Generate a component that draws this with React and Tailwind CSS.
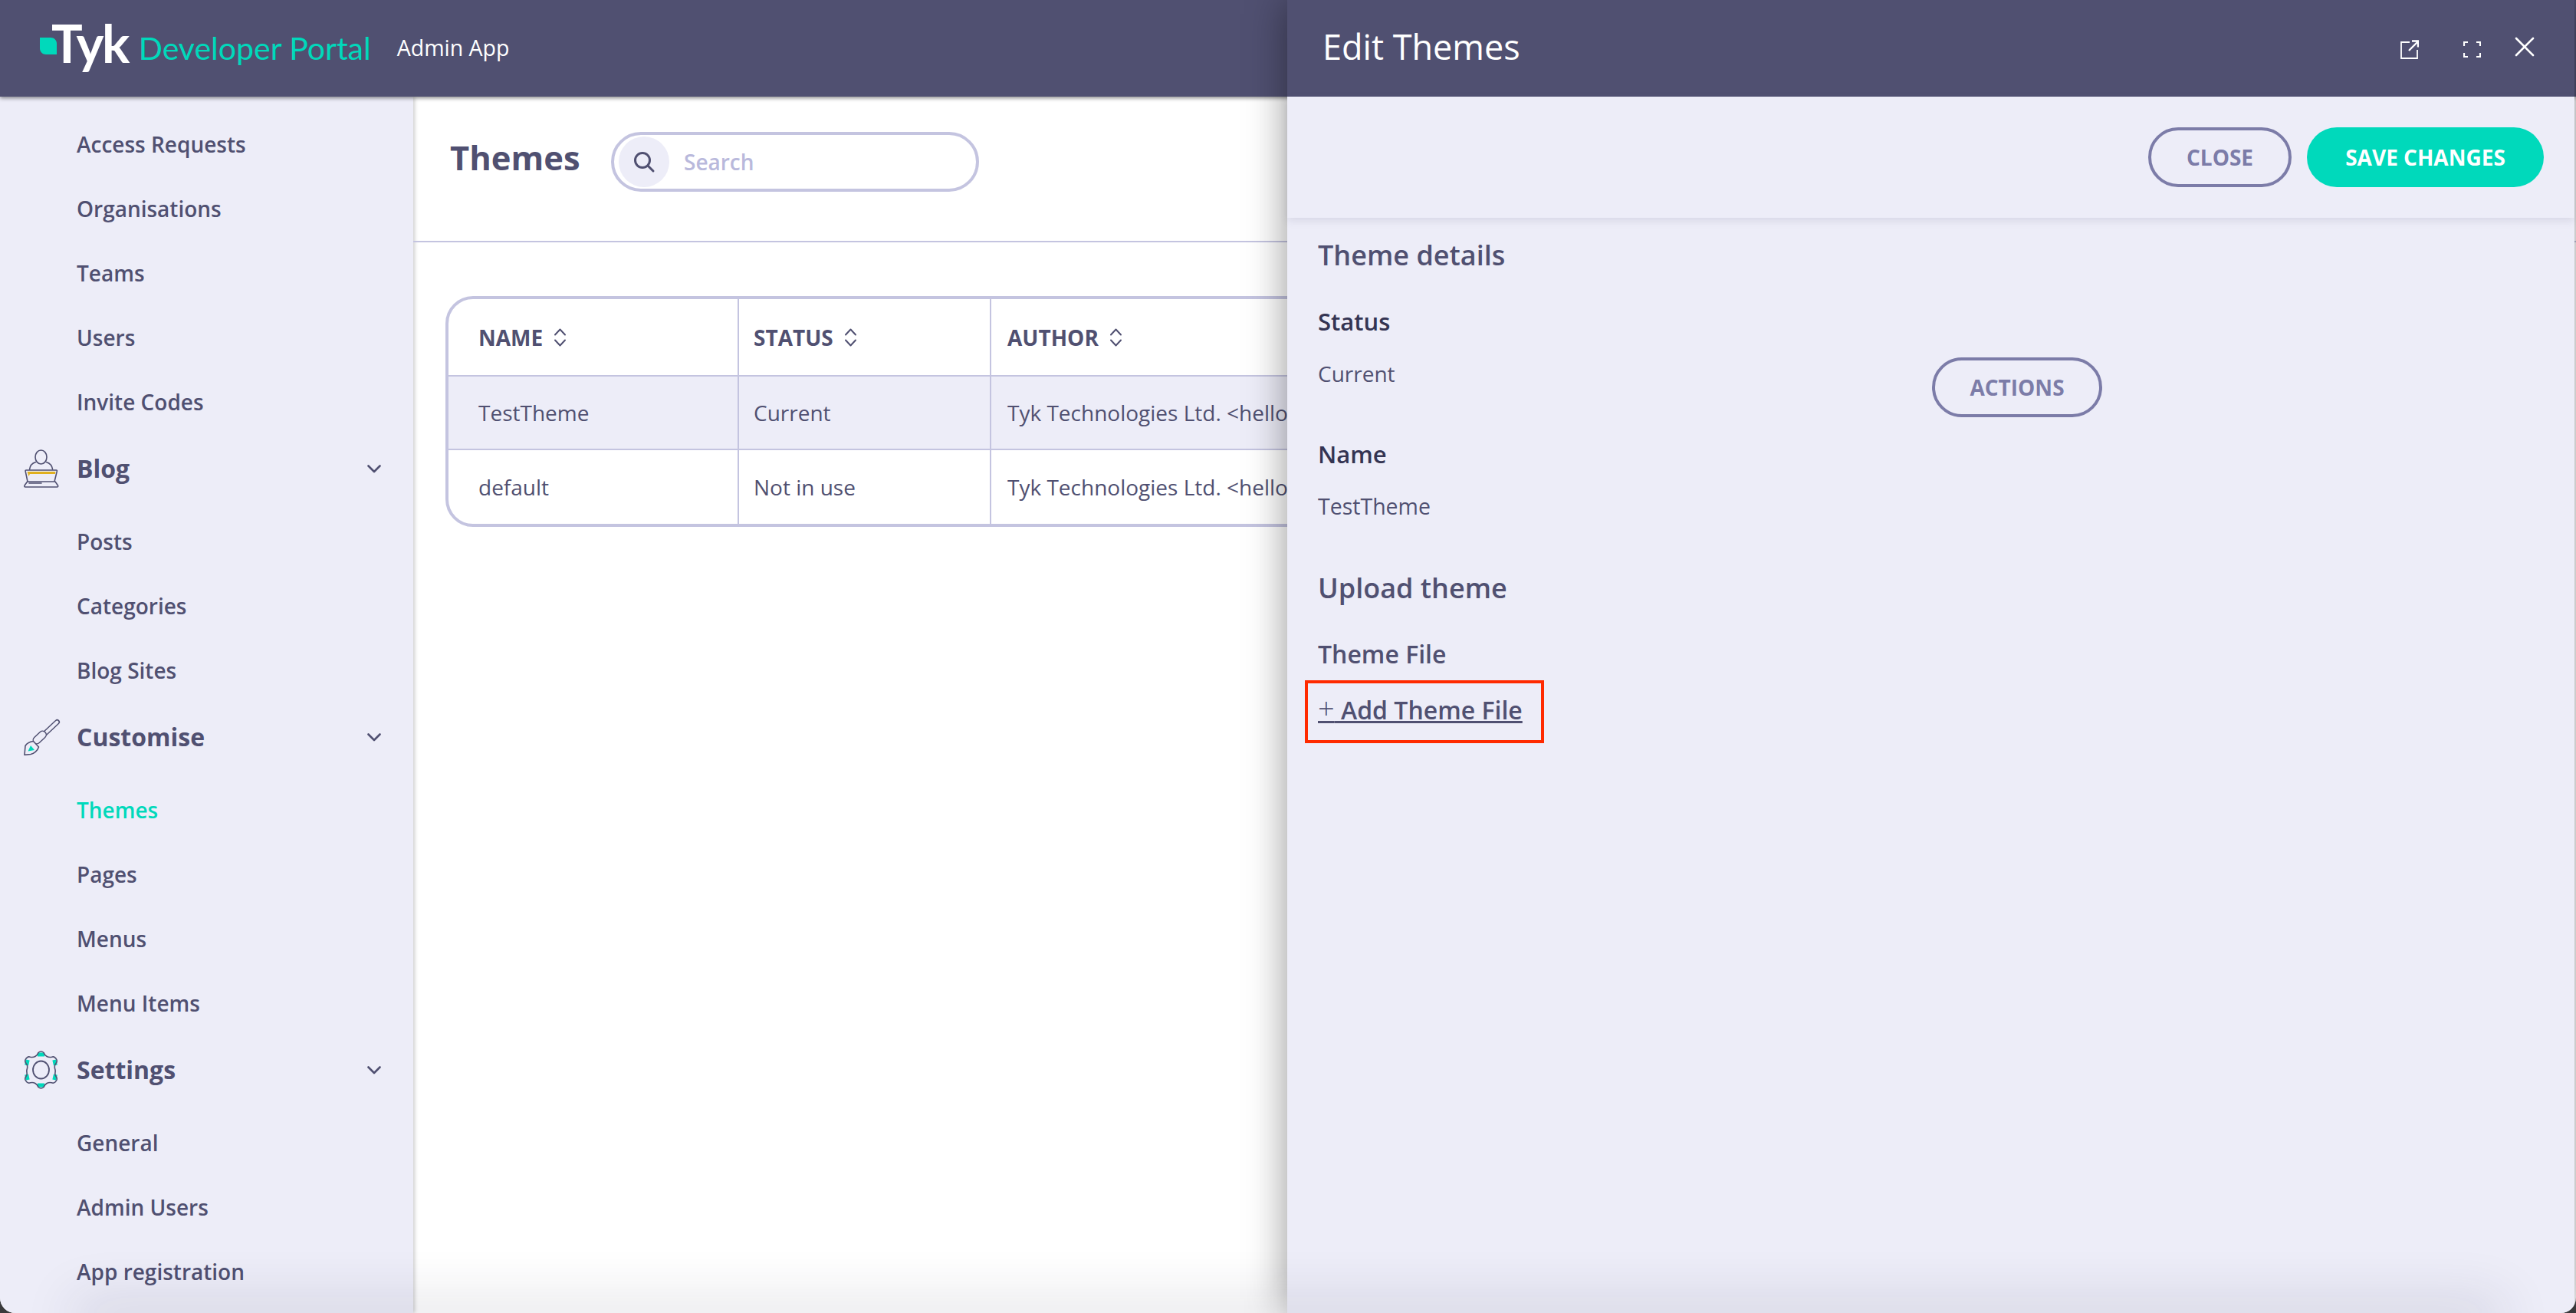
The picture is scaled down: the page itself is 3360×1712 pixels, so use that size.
import React from "react";

const C = "#505071";

function Chevron() {
  return (
    <svg width="18" height="11" viewBox="0 0 18 11" fill="none" stroke={C} strokeWidth="2.6" strokeLinecap="round" strokeLinejoin="round">
      <path d="M1.5 1.5 9 9l7.5-7.5" />
    </svg>
  );
}

function BlogIcon() {
  return (
    <svg width="46" height="50" viewBox="0 0 46 50" fill="none" stroke={C} strokeWidth="1.6" strokeLinejoin="round" strokeLinecap="round">
      <ellipse cx="22.5" cy="10" rx="7.5" ry="9" />
      <path d="M7.6 26C8 21 11 18 15.5 16.5M37.6 26C37 21 34 18 29.5 16.5" />
      <path d="M3 27h39.5c.6 0 1 .5.9 1.1L40 42H5L2.1 28.1C2 27.5 2.400 27 3 27Z" />
      <path d="M4.600 42 1 47c-.5 1 0 2 1 2h41.500c1 0 1.500-1 1-2l-3.500-5" />
      <path d="M7 44h16" />
      <path d="M4.500 29h37l-.5 3H8l-1.500 3-1-3Z" fill="#e0b01f" stroke="none" />
    </svg>
  );
}

function BrushIcon() {
  return (
    <svg width="48" height="48" viewBox="0 0 48 48" fill="none" strokeLinecap="round" strokeLinejoin="round">
      <path d="M43.500 4.500 28 19" stroke={C} strokeWidth="7" />
      <path d="M43.500 4.500 28 19" stroke="#ededf8" strokeWidth="4" />
      <path d="M24.500 21 17 28" stroke={C} strokeWidth="11" />
      <path d="M24.500 21 17 28" stroke="#ededf8" strokeWidth="8" />
      <path d="M1 47.300 2 35.500C4 32 9 30 12.500 29.500L19.500 37C18 42 13 46 9 46.500Z" fill="#ededf8" stroke={C} strokeWidth="1.600" />
      <path d="M5.500 42.500 9 35l5 6Z" fill="#00d9bb" />
    </svg>
  );
}

function GearIcon() {
  return (
    <svg width="46" height="50" viewBox="0 0 46 50" fill="none">
      <path d="M18 5h9M39.800 12l1.600 7M41.400 31l-1.600 7M27 45h-9M5.200 38l-1.600-7M3.600 19l1.600-7" stroke="#00d9bb" strokeWidth="5" />
      <path d="M19 2.500C21 .8 24 .8 26 2.500 27.500 7 32 9.500 36.500 8.200 39 7.300 41.500 9 43 12c.6 1.800.3 3-1 4.500-3 3-1.800 5.500-1 8.500.8 3-1.500 5.500 1 8.500 1.300 1.500 1.600 2.700 1 4.500-1.500 3-4 4.700-6.500 3.800C32 40.500 27.500 43 26 47.500c-2 1.700-5 1.700-7 0C17.500 43 13 40.500 8.500 41.800 6 42.700 3.500 41 2 38c-.6-1.800-.3-3 1-4.500 2.500-3 .2-5.500 1-8.500.8-3 2-5.500-1-8.500-1.300-1.500-1.600-2.700-1-4.500C3.500 9 6 7.300 8.500 8.200 13 9.500 17.500 7 19 2.500Z" stroke={C} strokeWidth="1.600" />
      <ellipse cx="22.500" cy="25" rx="10.500" ry="11.500" stroke={C} strokeWidth="1.800" />
    </svg>
  );
}

function SortIcon() {
  return (
    <svg width="19" height="24" viewBox="0 0 19 24" fill="none" stroke={C} strokeWidth="2" strokeLinecap="round" strokeLinejoin="round">
      <path d="M3 8.500 9.500 1.500 16 8.500M3 15.500l6.500 7 6.500-7" />
    </svg>
  );
}

function NavItem({ label, active }) {
  return (
    <div className={"flex h-[84px] items-center pl-[100px] text-[28px] font-semibold " + (active ? "text-[#00d9bb]" : "text-[#505071]")}>
      {label}
    </div>
  );
}

function NavGroup({ label, icon }) {
  return (
    <div className="flex h-[98px] items-center pb-[8px] pl-[31px] pr-[42px]">
      <div className="flex w-[69px] shrink-0 items-center">{icon}</div>
      <span className="flex-1 text-[32px] font-bold text-[#505071]">{label}</span>
      <Chevron />
    </div>
  );
}

function HeadCell({ label, className }) {
  return (
    <div className={"flex items-center border-b-2 border-[#c4c4e0] " + className}>
      <span className="text-[28px] font-bold text-[#505071]">{label}</span>
      <span className="ml-[13px]"><SortIcon /></span>
    </div>
  );
}

function Cell({ children, className }) {
  return <div className={"flex items-center overflow-hidden whitespace-nowrap text-[28px] text-[#505071] " + className}>{children}</div>;
}

function Btn({ children, className }) {
  return (
    <button className={"flex h-[78px] items-center justify-center rounded-full text-[28px] font-bold " + className}>
      {children}
    </button>
  );
}

export default function App() {
  return (
    <div className="h-[1712px] w-[3360px] bg-[#3a3a3c] font-['Open_Sans',sans-serif]">
      <div className="relative flex h-full w-full flex-col overflow-hidden rounded-b-[20px] bg-white">
        <header className="relative z-10 flex h-[126px] shrink-0 items-center bg-[#505071] pl-[52px] shadow-[0_2px_5px_rgba(0,0,0,0.45)]">
          <svg width="22" height="22" viewBox="0 0 22 22" className="mt-[-6px] shrink-0">
            <path d="M0 0h14c4.500 0 8 3.500 8 8v14H8c-4.500 0-8-3.500-8-8Z" fill="#00d9bb" />
          </svg>
          <span className="ml-[-7px] mt-[-14px] font-['Lato',sans-serif] text-[68px] font-bold leading-none tracking-[-2.5px] text-white">Tyk</span>
          <span className="ml-[14px] mt-[-2px] font-['Lato',sans-serif] text-[41px] font-normal leading-none text-[#00d9bb]">Developer Portal</span>
          <span className="ml-[34px] mt-[-2px] text-[28.5px] font-medium text-white">Admin App</span>
        </header>

        <div className="flex flex-1 overflow-hidden">
          <aside className="w-[539px] shrink-0 bg-[#ededf8] pt-[20px] shadow-[2px_0_5px_rgba(0,0,0,0.2)]">
            <NavItem label="Access Requests" />
            <NavItem label="Organisations" />
            <NavItem label="Teams" />
            <NavItem label="Users" />
            <NavItem label="Invite Codes" />
            <NavGroup label="Blog" icon={<BlogIcon />} />
            <NavItem label="Posts" />
            <NavItem label="Categories" />
            <NavItem label="Blog Sites" />
            <NavGroup label="Customise" icon={<BrushIcon />} />
            <NavItem label="Themes" active />
            <NavItem label="Pages" />
            <NavItem label="Menus" />
            <NavItem label="Menu Items" />
            <NavGroup label="Settings" icon={<GearIcon />} />
            <NavItem label="General" />
            <NavItem label="Admin Users" />
            <NavItem label="App registration" />
          </aside>

          <main className="flex-1">
            <div className="flex h-[190px] items-start border-b-2 border-[#c4c4e0] pl-[48px]">
              <h1 className="w-[210px] pt-[50px] text-[43.5px] font-bold leading-[60px] text-[#505071]">Themes</h1>
              <div className="mt-[46px] flex h-[78px] w-[480px] items-center rounded-full border-4 border-[#c4c4e0] pl-[6px]">
                <div className="flex h-[66px] w-[66px] items-center justify-center rounded-full bg-[#ededf8]">
                  <svg width="30" height="30" viewBox="0 0 30 30" fill="none" stroke={C} strokeWidth="3" strokeLinecap="round">
                    <circle cx="13" cy="13" r="9.500" />
                    <path d="m20 20 7 7" />
                  </svg>
                </div>
                <span className="ml-[19px] text-[28px] font-semibold text-[#b9b9dc]">Search</span>
              </div>
            </div>

            <div className="ml-[42px] mt-[70px] grid w-[2740px] grid-cols-[379px_329px_1fr] overflow-hidden rounded-[36px] border-4 border-[#c4c4e0]">
              <HeadCell label="NAME" className="h-[101px] border-r-2 pl-[39px]" />
              <HeadCell label="STATUS" className="h-[101px] border-r-2 pl-[19px]" />
              <HeadCell label="AUTHOR" className="h-[101px] pl-[21px]" />
              <Cell className="h-[96px] border-b-2 border-r-2 border-[#c4c4e0] bg-[#ededf8] pl-[39px]">TestTheme</Cell>
              <Cell className="h-[96px] border-b-2 border-r-2 border-[#c4c4e0] bg-[#ededf8] pl-[19px]">Current</Cell>
              <Cell className="h-[96px] border-b-2 border-[#c4c4e0] bg-[#ededf8] pl-[21px]">{"Tyk Technologies Ltd. <hello@tyk.io>"}</Cell>
              <Cell className="h-[96px] border-r-2 border-[#c4c4e0] pl-[39px]">default</Cell>
              <Cell className="h-[96px] border-r-2 border-[#c4c4e0] pl-[19px]">Not in use</Cell>
              <Cell className="h-[96px] pl-[21px]">{"Tyk Technologies Ltd. <hello@tyk.io>"}</Cell>
            </div>
          </main>
        </div>

        <section className="absolute bottom-0 left-[1679px] right-[2px] top-0 z-20 flex flex-col bg-[#ededf8] shadow-[0_0_50px_rgba(0,0,0,0.42)]">
          <div className="flex h-[126px] shrink-0 items-center bg-[#505071] pl-[46px] pr-[52px]">
            <span className="mt-[-6px] flex-1 text-[45px] font-medium leading-none text-white">Edit Themes</span>
            <svg width="24" height="25" viewBox="0 0 24 25" fill="none" stroke="#fff" strokeWidth="1.800" className="mr-[58px] mt-[2px]">
              <path d="M12 3H1v21h21V13" />
              <path d="m11 14 11-11M15 1.500h8v8" strokeWidth="2.400" />
            </svg>
            <svg width="23" height="21" viewBox="0 0 23 21" fill="none" stroke="#fff" strokeWidth="2.200" className="mr-[44px] mt-[2px]">
              <path d="M1 6V1h5M17 1h5v5M22 15v5h-5M6 20H1v-5" />
            </svg>
            <svg width="26" height="26" viewBox="0 0 26 26" fill="none" stroke="#fff" strokeWidth="2.600" strokeLinecap="round" className="mt-[-4px]">
              <path d="M2 2l22 22M24 2 2 24" />
            </svg>
          </div>

          <div className="flex h-[158px] shrink-0 items-start justify-end gap-[20px] pr-[40px] pt-[40px] shadow-[0_4px_10px_rgba(80,80,113,0.13)]">
            <Btn className="w-[187px] border-4 border-[#7c7ca8] text-[#7c7ca8]">CLOSE</Btn>
            <Btn className="w-[309px] bg-[#00d9bb] text-white">SAVE CHANGES</Btn>
          </div>

          <div className="pl-[40px] pt-[29px]">
            <h2 className="text-[36px] font-semibold leading-[40px] text-[#505071]">Theme details</h2>
            <div className="mt-[46px] flex items-start">
              <div className="w-[801px]">
                <div className="text-[31px] font-semibold leading-[40px] text-[#343452]">Status</div>
                <div className="mt-[28px] text-[28px] leading-[40px] text-[#505071]">Current</div>
              </div>
              <Btn className="mt-[67px] w-[222px] border-4 border-[#7c7ca8] text-[#7c7ca8]">ACTIONS</Btn>
            </div>
            <div className="mt-[28px] text-[31px] font-semibold leading-[40px] text-[#343452]">Name</div>
            <div className="mt-[28px] text-[28.5px] font-medium leading-[40px] text-[#505071]">TestTheme</div>
            <h2 className="mt-[67px] text-[36px] font-semibold leading-[40px] text-[#505071]">Upload theme</h2>
            <div className="mt-[46px] text-[32px] font-semibold leading-[40px] text-[#505071]">Theme File</div>
            <div className="relative mt-[31px] inline-block text-[32px] font-semibold leading-[40px] text-[#505071] underline">
              <span className="text-[38px] font-light leading-none">+</span> Add Theme File
              <div className="absolute -bottom-[23px] -left-[17px] -right-[28px] -top-[17px] border-4 border-[#ff2a00]" />
            </div>
          </div>
        </section>

        <div className="pointer-events-none absolute left-[110px] right-[110px] top-[1712px] z-30 h-[10px] shadow-[0_0_70px_14px_rgba(40,40,70,0.16)]" />
      </div>
    </div>
  );
}
